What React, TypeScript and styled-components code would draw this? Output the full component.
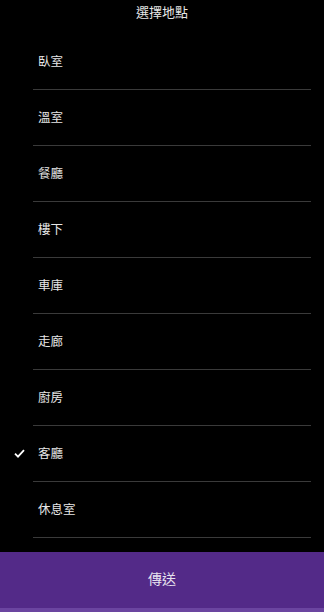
import React, { useState } from "react";
import styled, { createGlobalStyle } from "styled-components";

const Global = createGlobalStyle`
  html, body { margin: 0; padding: 0; background: #000; }
  body { font-family: "Noto Sans CJK TC", "Noto Sans", sans-serif; }
  * { box-sizing: border-box; }
`;

const Screen = styled.div`
  width: 324px;
  height: 612px;
  background: #000;
  display: flex;
  flex-direction: column;
  overflow: hidden;
`;

const Title = styled.div`
  height: 34px;
  display: flex;
  justify-content: center;
  padding-top: 3px;
  color: #e6e6e6;
  font-size: 13px;
  line-height: 18px;
`;

const List = styled.div`
  flex: 1;
  display: flex;
  flex-direction: column;
`;

const Row = styled.div`
  height: 56px;
  display: grid;
  grid-template-columns: 33px 1fr 13px;
  cursor: pointer;
`;

const CheckCell = styled.div`
  display: flex;
  align-items: center;
  justify-content: flex-end;
  padding-right: 8px;
  padding-bottom: 1px;
`;

const Label = styled.div`
  display: flex;
  align-items: center;
  padding-left: 5px;
  color: #e6e6e6;
  font-size: 12.5px;
  border-bottom: 1px solid #3a3a3a;
  padding-bottom: 2px;
`;

const SendBar = styled.button`
  height: 60px;
  border: none;
  background: #532a88;
  color: #e6e2ee;
  font-family: inherit;
  font-size: 14px;
  display: flex;
  align-items: center;
  justify-content: center;
  padding: 0 0 4px;
  border-bottom: 4px solid #6b45a0;
`;

const items = ["臥室", "溫室", "餐廳", "樓下", "車庫", "走廊", "廚房", "客廳", "休息室"];

const Check = () => (
  <svg width="11" height="9" viewBox="0 0 11 9">
    <path d="M1 4.6 L4 7.6 L10 1.2" fill="none" stroke="#fff" strokeWidth="1.8" />
  </svg>
);

export default function App() {
  const [sel, setSel] = useState(7);
  return (
    <Screen>
      <Global />
      <Title>選擇地點</Title>
      <List>
        {items.map((it, i) => (
          <Row key={it} onClick={() => setSel(i)}>
            <CheckCell>{sel === i ? <Check /> : null}</CheckCell>
            <Label>{it}</Label>
            <div />
          </Row>
        ))}
      </List>
      <SendBar>傳送</SendBar>
    </Screen>
  );
}
